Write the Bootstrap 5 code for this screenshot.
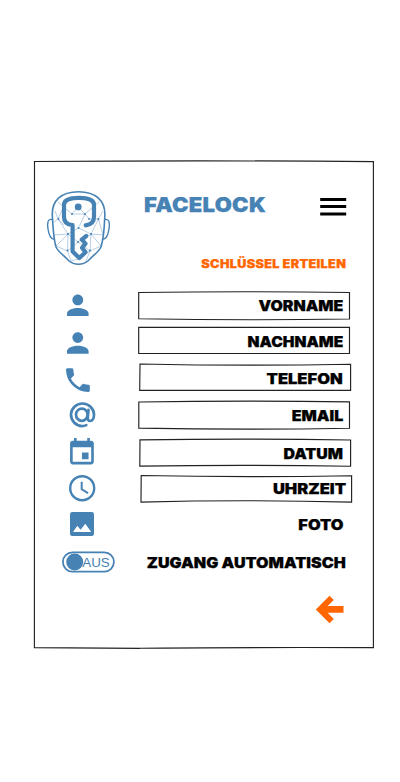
<!DOCTYPE html>
<html lang="de">
<head>
<meta charset="utf-8">
<meta name="viewport" content="width=device-width, initial-scale=1">
<title>Facelock</title>
<link href="https://cdn.jsdelivr.net/npm/bootstrap@5.3.0/dist/css/bootstrap.min.css" rel="stylesheet">
<style>
:root{--blue:#4682b4;--orange:#ff6600}
body{background:#fff;font-family:Inter,"Liberation Sans",sans-serif;color:#000}
.panel{width:340px;height:488px;margin:161px 0 0 34px}
.outline{left:0;top:0;fill:none;stroke:#222;stroke-width:1.15;overflow:visible}
.top{height:127px}
.logo{margin:27px 0 0 12px;width:66px;height:80px;color:var(--blue)}
.heavy{font-weight:900;line-height:1;white-space:nowrap;-webkit-text-stroke:.25px currentColor;transform:scaleX(var(--sx,1));transform-origin:right}
.brand{font-size:20px;color:var(--blue);margin:34px 0 0 31.5px;letter-spacing:.25px;--sx:1.105;transform-origin:left}
.burger{margin:36px 27px 0 0;width:27px;height:20px;color:#000}
.sub{font-size:11.2px;color:var(--orange);right:28px;top:98px;letter-spacing:.3px;--sx:1.13}
.entry{height:var(--h)}
.entry>svg{width:74px;color:var(--blue);flex:none}
.field{margin-left:22px;width:222px;height:100%;padding-right:17px}
.lbl{font-size:14.7px}
.low{padding-top:2px}
.lower{padding-top:3px}
.wide{padding-right:14px}
.s-vorname{--sx:1.083}.s-nachname{--sx:1.06}.s-telefon{--sx:1.125}.s-email{--sx:1.09}
.s-datum{--sx:1.082}.s-uhrzeit{--sx:1.125}.s-foto{--sx:1.115}.s-zugang{--sx:1.095}
svg text{font-family:"Liberation Sans",sans-serif}
.h35{--h:35px}.h36{--h:36px}.h37{--h:37px}.h38{--h:38px}.h39{--h:39px}
.back{margin:13px 30px 0 0}
</style>
<script src="https://cdn.jsdelivr.net/npm/bootstrap@5.3.0/dist/js/bootstrap.bundle.min.js"></script>
</head>
<body>
<main class="panel position-relative">
<svg class="outline position-absolute" width="340" height="488" viewBox="34 161 340 488"><path d="M34.5 161.5Q204 160.2 373.4 161.6Q372.4 400 373.4 647.6Q204 647.3 140 648.3Q90 648.2 34.4 647.6Z"/></svg>
<header class="top d-flex align-items-start position-relative">
  <svg class="logo" viewBox="46 188 66 80" fill="none" stroke="currentColor">
    <path stroke-width="1.6" d="M52.500 218C50.500 200 62 191.800 78.500 191.800S106.500 200 104.700 218C104.300 229 102.800 241 101 247C98.500 252.500 93 255 88.500 260.500Q84 264.200 78.500 264.200T68.500 260.500C64 255 58.500 252.500 56 247C54.200 241 53 229 52.500 218Z"/>
    <path stroke-width="1.400" d="M52 219.500C47.500 218.500 47.200 223 48 229C49 236 51.500 240 55 239M104.900 219.500C109.500 218.500 109.800 223 109 229C108 236 105.500 240 102 239"/>
    <path stroke-width=".6" opacity=".65" d="M58 202L72 214L78 207L85 214L99 202M72 214H85L78.500 228L68 234L58 219L55 211M58 219L64 206M85 214L89 219L98.500 219L103 211M98.500 219L91 234L78.500 228M98.500 219L103 235L91 234L90 251L101 246M91 234L78 242L68 234L54 235M68 234L56 246L67.500 251L68 234M67.500 251L78 242L90 251L86 261M67.500 251L71 261L78 259L90 251M58 219L64 225M54 222L58 219M91 234L101 246"/>
    <g fill="currentColor" stroke="none"><circle cx="78.200" cy="206.900" r="3.400"/><circle cx="72" cy="214" r="1"/><circle cx="85" cy="214" r="1"/><circle cx="58.500" cy="219" r="1"/><circle cx="98.300" cy="219" r="1"/><circle cx="78.500" cy="228" r="1"/><circle cx="68" cy="234" r="1"/><circle cx="91" cy="234" r="1"/><circle cx="67.500" cy="250.500" r="1"/><circle cx="90" cy="250.500" r="1"/><circle cx="89" cy="219" r=".9"/><circle cx="78" cy="242" r=".9"/></g>
    <path stroke-width="4.200" stroke-linecap="round" stroke-linejoin="round" d="M85.700 225.300C91.500 224.500 94 221.500 94 217V204.500C93.600 199.500 86 197.800 78.900 197.800S64.400 199.500 64 204.500V217C64 221.500 66.500 224.700 72.600 225.200V251.500L79.300 258L85.500 252.300L82 247.800L85.500 243.600L81.800 239.600L86.300 236"/>
  </svg>
  <h1 class="brand heavy mb-0">FACELOCK</h1>
  <button class="burger btn p-0 border-0 ms-auto lh-1" aria-label="Menü"><svg class="d-block" width="27" height="20" viewBox="0 0 27 20"><path fill="currentColor" d="M.2.900h26v3H.200zM.200 8.100h26v3H.200zM.200 15.500h26v3H.200z"/></svg></button>
  <h2 class="sub heavy mb-0 position-absolute">SCHLÜSSEL ERTEILEN</h2>
</header>
<section>
  <div class="entry h36 d-flex align-items-center">
    <svg class="ms-2" height="36" viewBox="42 288 74 36"><path fill="currentColor" transform="translate(61.600 289.100) scale(1.350)" d="M12 12c2.210 0 4-1.790 4-4s-1.790-4-4-4-4 1.790-4 4 1.790 4 4 4zm0 2c-2.670 0-8 1.340-8 4v2h16v-2c0-2.660-5.330-4-8-4z"/></svg>
    <div class="field position-relative d-flex align-items-center justify-content-end"><svg class="outline position-absolute" width="222" height="36" viewBox="138 288 222 36"><path d="M138.700 292.500Q245 291 349.500 292.500V319Q245 320.700 138.700 318.700Z"/></svg><span class="lbl heavy s-vorname">VORNAME</span></div>
  </div>
  <div class="entry h35 d-flex align-items-center">
    <svg class="ms-2" height="35" viewBox="42 324 74 35"><path fill="currentColor" transform="translate(61.600 326.800) scale(1.350)" d="M12 12c2.210 0 4-1.790 4-4s-1.790-4-4-4-4 1.790-4 4 1.790 4 4 4zm0 2c-2.670 0-8 1.340-8 4v2h16v-2c0-2.660-5.330-4-8-4z"/></svg>
    <div class="field low position-relative d-flex align-items-center justify-content-end"><svg class="outline position-absolute" width="222" height="35" viewBox="138 324 222 35"><path d="M138.700 327.400H349.500V353.500H138.700Z"/></svg><span class="lbl heavy s-nachname">NACHNAME</span></div>
  </div>
  <div class="entry h37 d-flex align-items-center">
    <svg class="ms-2" height="37" viewBox="42 359 74 37"><path fill="currentColor" transform="translate(62.100 364.200) scale(1.320)" d="M6.620 10.790c1.440 2.830 3.760 5.140 6.590 6.590l2.200-2.200c.27-.27.67-.36 1.020-.24 1.120.37 2.330.57 3.570.57.55 0 1 .45 1 1V20c0 .55-.45 1-1 1-9.390 0-17-7.610-17-17 0-.55.45-1 1-1h3.500c.55 0 1 .45 1 1 0 1.250.2 2.450.57 3.570.11.35.030.74-.25 1.020l-2.200 2.200z"/></svg>
    <div class="field lower position-relative d-flex align-items-center justify-content-end"><svg class="outline position-absolute" width="222" height="37" viewBox="138 359 222 37"><path d="M140 364Q245 366.200 350.600 364.300V390.400H139.700Z"/></svg><span class="lbl heavy s-telefon">TELEFON</span></div>
  </div>
  <div class="entry h38 d-flex align-items-center">
    <svg class="ms-2" height="38" viewBox="42 396 74 38" fill="none" stroke="currentColor" stroke-width="2.700" stroke-linecap="round"><path d="M86.300 425.100C84.800 425.800 83.500 426.100 82 426.100A11.500 11.300 0 1 1 94 414.500C94 418.500 92.200 421 90.200 421C88 421 87.600 419.200 87.800 417L88.500 409.800"/><ellipse cx="81.800" cy="414.700" rx="5.800" ry="6.100"/></svg>
    <div class="field lower position-relative d-flex align-items-center justify-content-end"><svg class="outline position-absolute" width="222" height="38" viewBox="138 396 222 38"><path d="M138.800 402Q245 400.400 349.500 401.900V428.200Q245 430 138.800 428.100Z"/></svg><span class="lbl heavy s-email">EMAIL</span></div>
  </div>
  <div class="entry h37 d-flex align-items-center">
    <svg class="ms-2" height="37" viewBox="42 434 74 37"><path fill="currentColor" transform="translate(66.100 436.700) scale(1.320)" d="M17 12h-5v5h5v-5zM16 1v2H8V1H6v2H5c-1.110 0-1.990.9-1.990 2L3 19c0 1.100.89 2 2 2h14c1.100 0 2-.9 2-2V5c0-1.100-.9-2-2-2h-1V1h-2zm3 18H5V8h14v11z"/></svg>
    <div class="field lower position-relative d-flex align-items-center justify-content-end"><svg class="outline position-absolute" width="222" height="37" viewBox="138 434 222 37"><path d="M140 439.900Q245 438.400 350.600 440V466.200Q245 464.700 139.800 466.100Z"/></svg><span class="lbl heavy s-datum">DATUM</span></div>
  </div>
  <div class="entry h36 d-flex align-items-center">
    <svg class="ms-2" height="36" viewBox="42 471 74 36" fill="none" stroke="currentColor"><circle cx="82.200" cy="488.200" r="12" stroke-width="2.400"/><path stroke-width="2" d="M81.700 481.800V489.300L88 493.200"/></svg>
    <div class="field wide position-relative d-flex align-items-center justify-content-end"><svg class="outline position-absolute" width="222" height="36" viewBox="138 471 222 36"><path d="M141.200 475.500Q245 477.600 351.600 475.700V502.100Q245 499.300 141 502.100Z"/></svg><span class="lbl heavy s-uhrzeit">UHRZEIT</span></div>
  </div>
  <div class="entry h36 d-flex align-items-center">
    <svg class="ms-2" height="36" viewBox="42 507 74 36"><rect x="70" y="512" width="24" height="24" rx="2.300" fill="currentColor"/><path fill="#fff" d="M73 532L77.300 525.800L80.600 529.700L85.300 523.800L91.200 532Z"/></svg>
    <div class="field position-relative d-flex align-items-center justify-content-end"><span class="lbl heavy s-foto">FOTO</span></div>
  </div>
  <div class="entry h39 d-flex align-items-center">
    <svg class="ms-2" height="39" viewBox="42 543 74 39"><rect x="62.900" y="552.400" width="51" height="19.200" rx="9.600" fill="none" stroke="currentColor" stroke-width="1.800"/><circle cx="74.700" cy="562" r="8.500" fill="currentColor"/><text x="82.300" y="566.900" font-size="13.500" textLength="27.500" lengthAdjust="spacingAndGlyphs" fill="currentColor">AUS</text></svg>
    <div class="field wide low position-relative d-flex align-items-center justify-content-end"><span class="lbl heavy s-zugang">ZUGANG AUTOMATISCH</span></div>
  </div>
</section>
<footer class="d-flex"><button class="back btn p-0 border-0 ms-auto lh-1" aria-label="Zurück"><svg class="d-block" width="29" height="29" viewBox="0 0 29 29"><path fill="#ff6600" d="M.8 14.500L14.500.8L18.800 5L12.700 11H28.500V17.800H12.700L18.800 24L14.500 28.200Z"/></svg></button></footer>
</main>
</body>
</html>
